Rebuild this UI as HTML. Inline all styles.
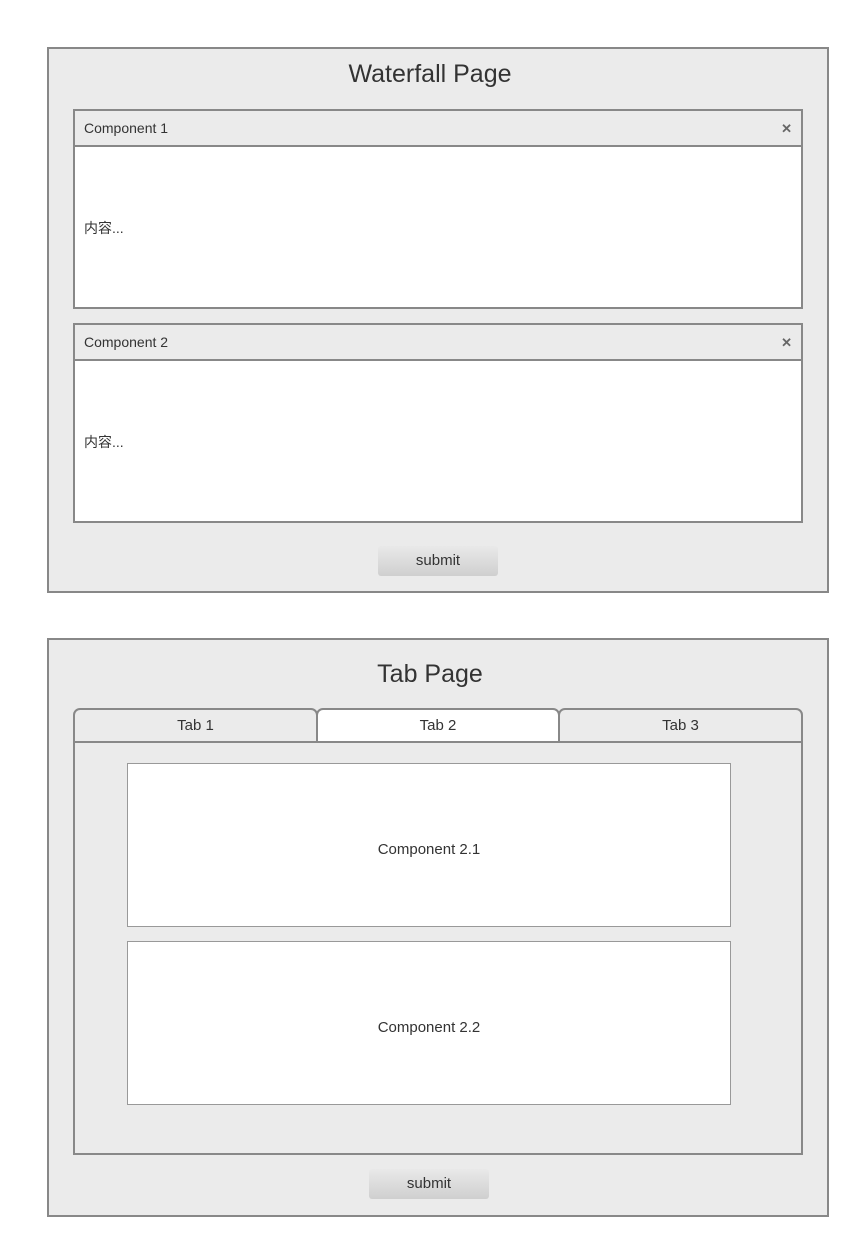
<!DOCTYPE html>
<html><head><meta charset="utf-8"><style>
*{box-sizing:border-box;margin:0;padding:0}
body{width:860px;height:1248px;background:#fff;position:relative;font-family:"Liberation Sans","Noto Sans CJK SC",sans-serif;color:#333;overflow:hidden}
.a{position:absolute}
.box{background:#ebebeb;border:2px solid #888}
.title{font-size:25px;text-align:center;width:100%}
.comp{border:2px solid #888;background:#fff}
.hd{position:absolute;left:0;right:0;top:0;height:36px;background:#ebebeb;border-bottom:2px solid #888;font-size:14px;line-height:34px;padding-left:9px}
.x{position:absolute;right:9px;top:1px;font-size:13px;color:#666;font-weight:bold}
.body{position:absolute;left:9px;font-size:14px}
.btn{background:linear-gradient(#e9e9e9,#cfcfcf);border-radius:3px;font-size:15px;text-align:center;line-height:30px;height:30px;width:120px}
.tab{position:absolute;top:708px;height:35px;border:2px solid #888;border-radius:7px 7px 0 0;background:#ebebeb;font-size:15px;text-align:center;line-height:31px}
.ic{position:absolute;background:#fff;border:1px solid #999;font-size:15px;text-align:center}
</style></head><body>
<div class="a box" style="left:47px;top:47px;width:782px;height:546px"></div>
<div class="a title" style="left:0;top:60px;">Waterfall Page</div>
<div class="a comp" style="left:73px;top:109px;width:730px;height:200px"><div class="hd">Component 1<span class="x">✕</span></div><div class="body" style="top:107px">内容...</div></div>
<div class="a comp" style="left:73px;top:323px;width:730px;height:200px"><div class="hd">Component 2<span class="x">✕</span></div><div class="body" style="top:107px">内容...</div></div>
<div class="a btn" style="left:378px;top:546px">submit</div>

<div class="a box" style="left:47px;top:638px;width:782px;height:579px"></div>
<div class="a title" style="left:0;top:660px;">Tab Page</div>
<div class="a" style="left:73px;top:741px;width:730px;height:414px;border:2px solid #888;background:#ebebeb"></div>
<div class="tab" style="left:73px;width:245px">Tab 1</div>
<div class="tab" style="left:316px;width:244px;background:#fff">Tab 2</div>
<div class="tab" style="left:558px;width:245px">Tab 3</div>
<div class="ic" style="left:127px;top:763px;width:604px;height:164px;line-height:172px">Component 2.1</div>
<div class="ic" style="left:127px;top:941px;width:604px;height:164px;line-height:172px">Component 2.2</div>
<div class="a btn" style="left:369px;top:1169px">submit</div>
</body></html>
